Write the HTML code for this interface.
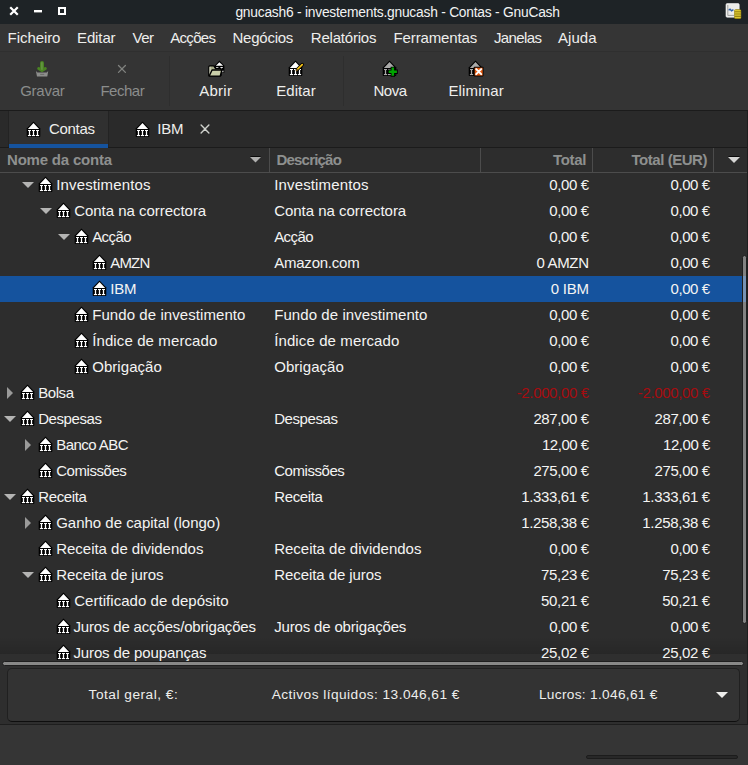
<!DOCTYPE html><html><head><meta charset="utf-8"><title>gnucash6 - investements.gnucash - Contas - GnuCash</title><style>
html,body{margin:0;padding:0}
body{width:748px;height:765px;overflow:hidden;position:relative;background:#353535;font-family:"Liberation Sans",sans-serif;font-size:15px;color:#eeeeec}
.abs{position:absolute;display:block}
.t{position:absolute;white-space:pre;display:block}
.title{font-size:13.8px;color:#f2f3f3}
.menu{color:#eeeeec}
.tb{color:#eeeeec}
.tb.dis{color:#8b8d8c}
.tab{color:#eeeeec}
.hd{font-weight:bold;color:#8e908f}
.cell{color:#f4f4f3}
.neg{color:#a60c10}
.sum{font-size:13.7px;color:#eeeeec}
#titlebar{left:0;top:0;width:748px;height:24px;background:#1e2326}
#menubar{left:0;top:24px;width:748px;height:27px;background:#353535}
#menuline{left:0;top:51px;width:748px;height:1px;background:#2f2f2f}
#toolbar{left:0;top:52px;width:748px;height:58px;background:#343434}
#nbline{left:0;top:110px;width:748px;height:1px;background:#1b1b1b}
#nbhead{left:0;top:111px;width:748px;height:36px;background:#2a2a2a}
#tabact{left:8px;top:111px;width:99px;height:36px;background:#303030;border-left:1px solid #232323;border-right:1px solid #232323}
#tabul{left:9px;top:144px;width:99px;height:4px;background:#15539e}
#nbline2{left:0;top:147px;width:748px;height:1px;background:#1b1b1b}
#thead{left:0;top:148px;width:748px;height:24px;background:#2d2d2d}
#theadline{left:0;top:172px;width:748px;height:1px;background:#4c4c4c}
.vsep{position:absolute;top:148px;width:1px;height:24px;background:#4c4c4c}
#treebg{left:0;top:173px;width:748px;height:488px;background:#2d2d2d}
#tree{position:absolute;left:0;top:0;width:748px;height:661px;overflow:hidden}
.selrow{position:absolute;left:0;width:748px;height:26px;background:#15539e}
#hband{left:0;top:654px;width:748px;height:14px;background:#2f2f2f}
#sumarea{left:0;top:667px;width:748px;height:57px;background:#2e2e2e}
#frameL{left:0;top:111px;width:1px;height:613px;background:#1e1e1e}
#frameR{left:747px;top:111px;width:1px;height:613px;background:#1e1e1e}
#frameB{left:0;top:724px;width:748px;height:1px;background:#1e1e1e}
#sumbox{left:7px;top:668px;width:731px;height:52px;border:1px solid #202020;border-bottom-color:#0e0e0e;border-radius:5px;background:#333333}
#status{left:0;top:725px;width:748px;height:40px;background:#353535}
#prog{left:586px;top:755px;width:150px;height:2px;border:1px solid #1c1c1c;border-radius:2px;background:#282828}

</style></head><body>
<svg width="0" height="0" style="position:absolute"><defs>
<g id="bank">
<path d="M9.5 2.5 L16.3 9.6 L16.3 17.2 Q16.3 17.9 15.6 17.9 L3.4 17.9 Q2.7 17.9 2.7 17.2 L2.7 9.6 Z" fill="#000"/>
<polygon points="9.5,4.1 15.1,9.9 3.9,9.9" fill="#fff"/>
<g fill="#fff">
<rect x="4" y="11" width="3" height="1"/><rect x="4.85" y="11" width="1.3" height="6"/><rect x="3.9" y="16" width="3.2" height="1.1"/>
<rect x="8" y="11" width="3" height="1"/><rect x="8.85" y="11" width="1.3" height="6"/><rect x="7.9" y="16" width="3.2" height="1.1"/>
<rect x="12" y="11" width="3" height="1"/><rect x="12.85" y="11" width="1.3" height="6"/><rect x="11.9" y="16" width="3.2" height="1.1"/>
</g>
</g>
<g id="bankg">
<path d="M9.5 2.5 L16.3 9.6 L16.3 17.2 Q16.3 17.9 15.6 17.9 L3.4 17.9 Q2.7 17.9 2.7 17.2 L2.7 9.6 Z" fill="#000"/>
<polygon points="9.5,4.1 15.1,9.9 3.9,9.9" fill="#a9a9a8"/>
<g fill="#a9a9a8">
<rect x="4" y="11" width="3" height="1"/><rect x="4.85" y="11" width="1.3" height="6"/><rect x="3.9" y="16" width="3.2" height="1.1"/>
<rect x="8" y="11" width="3" height="1"/><rect x="8.85" y="11" width="1.3" height="6"/><rect x="7.9" y="16" width="3.2" height="1.1"/>
<rect x="12" y="11" width="3" height="1"/><rect x="12.85" y="11" width="1.3" height="6"/><rect x="11.9" y="16" width="3.2" height="1.1"/>
</g>
</g>
</defs></svg>
<div class="abs" id="titlebar"></div>
<div class="abs" id="menubar"></div>
<div class="abs" id="menuline"></div>
<div class="abs" id="toolbar"></div>
<div class="abs" id="nbline"></div>
<div class="abs" id="nbhead"></div>
<div class="abs" id="nbline2"></div>
<div class="abs" id="tabact"></div>
<div class="abs" id="tabul"></div>
<div class="abs" id="thead"></div>
<div class="abs" id="theadline"></div>
<div class="vsep" style="left:269px"></div>
<div class="vsep" style="left:480px"></div>
<div class="vsep" style="left:592px"></div>
<div class="vsep" style="left:713px"></div>
<div class="abs" id="treebg"></div>
<!-- window buttons -->
<svg class="abs" style="left:0;top:0" width="80" height="24">
<path d="M11 8 L17 14 M17 8 L11 14" stroke="#fff" stroke-width="2.2" stroke-linecap="square"/>
<rect x="34" y="10" width="8" height="2.4" fill="#fff"/>
<rect x="59" y="8" width="6" height="6" fill="none" stroke="#fff" stroke-width="2"/>
</svg>
<!-- header arrows -->
<svg class="abs" style="left:250px;top:156px" width="11" height="7"><rect x="0.5" y="0" width="10" height="1" fill="#0a0a0a"/><polygon points="0,1 11,1 5.5,6.5" fill="#b0b0af"/></svg>
<svg class="abs" style="left:728px;top:156px" width="12" height="7"><rect x="0.5" y="0" width="11" height="1" fill="#0a0a0a"/><polygon points="0,1 12,1 6,7" fill="#d6d6d5"/></svg>
<!-- toolbar separators -->
<div class="abs" style="left:169px;top:56px;width:1px;height:50px;background:#2e2e2e"></div>
<div class="abs" style="left:343px;top:56px;width:1px;height:50px;background:#2e2e2e"></div>
<!-- tab icons -->
<svg class="abs" style="left:24px;top:119px" width="20" height="20"><use href="#bank"/></svg>
<svg class="abs" style="left:133px;top:119px" width="20" height="20"><use href="#bank"/></svg>
<svg class="abs" style="left:199px;top:123px" width="12" height="12"><path d="M2.1 2.1 L9.9 9.9 M9.9 2.1 L2.1 9.9" stroke="#cfd1cc" stroke-width="1.4" stroke-linecap="round"/></svg>
<div class="abs" id="sumarea"></div>
<div class="abs" id="sumbox"></div>
<div class="abs" id="status"></div>
<div class="abs" id="prog"></div>
<div class="abs" style="left:0;top:636px;width:748px;height:18px;background:linear-gradient(rgba(0,0,0,0),rgba(0,0,0,.13))"></div>
<div class="abs" id="hband"></div>
<!-- toolbar icons -->
<svg class="abs" style="left:30px;top:56px" width="24" height="24">
<rect x="10" y="4.9" width="4" height="10.6" rx="2" fill="#4a8322"/>
<path d="M8.7 12.5 L12 14.5 L15.3 12.5" fill="none" stroke="#4a8322" stroke-width="3" stroke-linecap="round" stroke-linejoin="round"/>
<rect x="11.5" y="6.2" width="0.9" height="7.6" fill="#7ba65e"/>
<path d="M5.9 14.9 L7 20.6 L17.3 20.6 L18.2 14.9 L16.7 16.4 L7.5 16.4 Z" fill="#8d8e8c"/>
<rect x="10.2" y="17.9" width="4" height="0.9" fill="#666765"/>
</svg>
<svg class="abs" style="left:110px;top:56px" width="24" height="24"><path d="M8.5 9.5 L15.4 16.4 M15.4 9.5 L8.5 16.4" stroke="#80827f" stroke-width="1.3" stroke-linecap="round"/></svg>
<svg class="abs" style="left:204px;top:56px" width="24" height="24">
<path d="M15.4 4.6 L20.4 9.7 L20.4 16.8 L11 16.8 L10.6 9.7 Z" fill="#000"/>
<polygon points="15.4,6.2 19.2,9.7 11.8,9.7" fill="#fff"/>
<rect x="12" y="11" width="2.4" height="0.9" fill="#fff"/><rect x="12.8" y="11" width="0.9" height="2.2" fill="#fff"/>
<rect x="16.2" y="11" width="2.6" height="0.9" fill="#fff"/><rect x="17.1" y="11" width="0.9" height="2.6" fill="#fff"/>
<rect x="18.2" y="14.6" width="1.2" height="1.6" fill="#fff"/>
<path d="M4.9 19.6 L4.9 10.8 Q4.9 9.9 5.8 9.9 L9.9 9.9 L11.6 12.5 L17 12.5 L17 19.6 Z" fill="#a8ad89" stroke="#000" stroke-width="1.4" stroke-linejoin="round"/>
<rect x="5.5" y="10.8" width="0.9" height="8.6" fill="#eeeedd"/>
<path d="M8.1 14 L17.9 14 L16.2 20.1 L5.1 20.1 Z" fill="#c9cea9" stroke="#000" stroke-width="1.4" stroke-linejoin="round"/>
</svg>
<svg class="abs" style="left:286.3px;top:58.3px" width="24" height="24">
<use href="#bank"/>
<path d="M11.3 11.5 L16.3 6.5" stroke="#000" stroke-width="3.2" stroke-linecap="round"/>
<path d="M11.4 11.4 L16.2 6.6" stroke="#f6c318" stroke-width="1.7" stroke-linecap="round"/>
<path d="M10.4 12.5 L11.2 11.7" stroke="#6b4a10" stroke-width="1.4" stroke-linecap="round"/>
</svg>
<svg class="abs" style="left:380.3px;top:58.3px" width="24" height="24">
<use href="#bankg"/>
<path d="M10.600000000000001 8.7 H15.0 V11.5 H17.8 V15.899999999999999 H15.0 V18.7 H10.600000000000001 V15.899999999999999 H7.800000000000001 V11.5 H10.600000000000001 Z" fill="#000"/>
<path d="M11.5 9.6 H14.100000000000001 V12.399999999999999 H16.9 V15.0 H14.100000000000001 V17.799999999999997 H11.5 V15.0 H8.700000000000001 V12.399999999999999 H11.5 Z" fill="#00a400"/>
</svg>
<svg class="abs" style="left:466.3px;top:58.3px" width="24" height="24">
<use href="#bankg"/>
<rect x="7.7" y="8.8" width="9.8" height="9.6" rx="0.8" fill="#000"/>
<rect x="8.7" y="9.7" width="8" height="7.9" fill="#e0570f"/>
<path d="M10.2 11.1 L15.2 16.1 M15.2 11.1 L10.2 16.1" stroke="#fff" stroke-width="2" stroke-linecap="round"/>
</svg>
<!-- app icon -->
<svg class="abs" style="left:724px;top:2px" width="20" height="20">
<rect x="2" y="1.6" width="13.2" height="13.6" rx="1.2" fill="#ecece9" stroke="#fbfbfb" stroke-width="0.6"/>
<path d="M3.8 3 V13.4 H10" stroke="#8d8d8d" stroke-width="0.8" fill="none"/>
<path d="M4.6 8.2 L6 7.2 L7.6 8.8 L9.4 7.6" stroke="#2e5fa8" stroke-width="1.3" fill="none"/>
<rect x="10.2" y="7.2" width="7" height="9.8" rx="1.6" fill="#9a8510"/>
<rect x="10.6" y="8" width="6.2" height="1.2" rx=".6" fill="#dcc830"/>
<rect x="10.6" y="10.3" width="6.2" height="1.2" rx=".6" fill="#dcc830"/>
<rect x="10.6" y="12.6" width="6.2" height="1.2" rx=".6" fill="#dcc830"/>
<rect x="10.6" y="14.9" width="6.2" height="1.2" rx=".6" fill="#dcc830"/>
</svg>

<div id="tree">
<svg class="abs" style="left:22px;top:182px" width="12" height="6"><polygon points="0,0 12,0 6,6" fill="#b4b4b3"/></svg>
<svg class="abs ic" style="left:36px;top:174px" width="20" height="20"><use href="#bank"/></svg>
<svg class="abs" style="left:40px;top:208px" width="12" height="6"><polygon points="0,0 12,0 6,6" fill="#b4b4b3"/></svg>
<svg class="abs ic" style="left:54px;top:200px" width="20" height="20"><use href="#bank"/></svg>
<svg class="abs" style="left:58px;top:234px" width="12" height="6"><polygon points="0,0 12,0 6,6" fill="#b4b4b3"/></svg>
<svg class="abs ic" style="left:72px;top:226px" width="20" height="20"><use href="#bank"/></svg>
<svg class="abs ic" style="left:90px;top:252px" width="20" height="20"><use href="#bank"/></svg>
<div class="selrow" style="top:276px"></div>
<svg class="abs ic" style="left:90px;top:278px" width="20" height="20"><use href="#bank"/></svg>
<svg class="abs ic" style="left:72px;top:304px" width="20" height="20"><use href="#bank"/></svg>
<svg class="abs ic" style="left:72px;top:330px" width="20" height="20"><use href="#bank"/></svg>
<svg class="abs ic" style="left:72px;top:356px" width="20" height="20"><use href="#bank"/></svg>
<svg class="abs" style="left:7px;top:387px" width="6" height="12"><polygon points="0,0 6,6 0,12" fill="#9a9a99"/></svg>
<svg class="abs ic" style="left:18px;top:382px" width="20" height="20"><use href="#bank"/></svg>
<svg class="abs" style="left:4px;top:416px" width="12" height="6"><polygon points="0,0 12,0 6,6" fill="#b4b4b3"/></svg>
<svg class="abs ic" style="left:18px;top:408px" width="20" height="20"><use href="#bank"/></svg>
<svg class="abs" style="left:25px;top:439px" width="6" height="12"><polygon points="0,0 6,6 0,12" fill="#9a9a99"/></svg>
<svg class="abs ic" style="left:36px;top:434px" width="20" height="20"><use href="#bank"/></svg>
<svg class="abs ic" style="left:36px;top:460px" width="20" height="20"><use href="#bank"/></svg>
<svg class="abs" style="left:4px;top:494px" width="12" height="6"><polygon points="0,0 12,0 6,6" fill="#b4b4b3"/></svg>
<svg class="abs ic" style="left:18px;top:486px" width="20" height="20"><use href="#bank"/></svg>
<svg class="abs" style="left:25px;top:517px" width="6" height="12"><polygon points="0,0 6,6 0,12" fill="#9a9a99"/></svg>
<svg class="abs ic" style="left:36px;top:512px" width="20" height="20"><use href="#bank"/></svg>
<svg class="abs ic" style="left:36px;top:538px" width="20" height="20"><use href="#bank"/></svg>
<svg class="abs" style="left:22px;top:572px" width="12" height="6"><polygon points="0,0 12,0 6,6" fill="#b4b4b3"/></svg>
<svg class="abs ic" style="left:36px;top:564px" width="20" height="20"><use href="#bank"/></svg>
<svg class="abs ic" style="left:54px;top:590px" width="20" height="20"><use href="#bank"/></svg>
<svg class="abs ic" style="left:54px;top:616px" width="20" height="20"><use href="#bank"/></svg>
<svg class="abs ic" style="left:54px;top:642px" width="20" height="20"><use href="#bank"/></svg>
</div>
<span class="t title" id="t0" style="left:235.4px;top:0.6px;line-height:24px;letter-spacing:-0.232px">gnucash6 - investements.gnucash - Contas - GnuCash</span>
<span class="t menu" id="t1" style="left:7.6px;top:24.4px;line-height:27px;letter-spacing:-0.070px">Ficheiro</span>
<span class="t menu" id="t2" style="left:77px;top:24.4px;line-height:27px;letter-spacing:-0.115px">Editar</span>
<span class="t menu" id="t3" style="left:132.4px;top:24.4px;line-height:27px;letter-spacing:-0.405px">Ver</span>
<span class="t menu" id="t4" style="left:170.3px;top:24.4px;line-height:27px;letter-spacing:-0.717px">Acções</span>
<span class="t menu" id="t5" style="left:232.5px;top:24.4px;line-height:27px;letter-spacing:-0.243px">Negócios</span>
<span class="t menu" id="t6" style="left:310.8px;top:24.4px;line-height:27px;letter-spacing:-0.213px">Relatórios</span>
<span class="t menu" id="t7" style="left:393.5px;top:24.4px;line-height:27px;letter-spacing:-0.121px">Ferramentas</span>
<span class="t menu" id="t8" style="left:493.9px;top:24.4px;line-height:27px;letter-spacing:-0.600px">Janelas</span>
<span class="t menu" id="t9" style="left:558px;top:24.4px;line-height:27px;letter-spacing:0.045px">Ajuda</span>
<span class="t tb dis" id="t10" style="left:20.2px;top:78px;line-height:26px;letter-spacing:-0.241px">Gravar</span>
<span class="t tb dis" id="t11" style="left:100.4px;top:78px;line-height:26px;letter-spacing:-0.481px">Fechar</span>
<span class="t tb " id="t12" style="left:199.2px;top:78px;line-height:26px;letter-spacing:0.266px">Abrir</span>
<span class="t tb " id="t13" style="left:276.2px;top:78px;line-height:26px;letter-spacing:0.085px">Editar</span>
<span class="t tb " id="t14" style="left:373.5px;top:78px;line-height:26px;letter-spacing:-0.508px">Nova</span>
<span class="t tb " id="t15" style="left:448.4px;top:78px;line-height:26px;letter-spacing:0.152px">Eliminar</span>
<span class="t tab" id="t16" style="left:49.1px;top:116px;line-height:26px;letter-spacing:-0.339px">Contas</span>
<span class="t tab" id="t17" style="left:157.2px;top:116px;line-height:26px;letter-spacing:-0.224px">IBM</span>
<span class="t hd" id="t18" style="left:7px;top:148px;line-height:24px;letter-spacing:-0.195px">Nome da conta</span>
<span class="t hd" id="t19" style="left:276.5px;top:148px;line-height:24px;letter-spacing:-0.802px">Descrição</span>
<span class="t hd" id="t20" style="right:162px;top:148px;line-height:24px;letter-spacing:-0.344px">Total</span>
<span class="t hd" id="t21" style="right:41px;top:148px;line-height:24px;letter-spacing:-0.459px">Total (EUR)</span>
<span class="t cell" id="t22" style="left:56.2px;top:172px;line-height:26px;letter-spacing:0.150px">Investimentos</span>
<span class="t cell" id="t23" style="left:274.2px;top:172px;line-height:26px;letter-spacing:0.150px">Investimentos</span>
<span class="t cell" id="t24" style="right:159.3px;top:172px;line-height:26px;letter-spacing:-0.386px">0,00 €</span>
<span class="t cell" id="t25" style="right:38.2px;top:172px;line-height:26px;letter-spacing:-0.386px">0,00 €</span>
<span class="t cell" id="t26" style="left:74.2px;top:198px;line-height:26px;letter-spacing:-0.030px">Conta na correctora</span>
<span class="t cell" id="t27" style="left:274.2px;top:198px;line-height:26px;letter-spacing:-0.030px">Conta na correctora</span>
<span class="t cell" id="t28" style="right:159.3px;top:198px;line-height:26px;letter-spacing:-0.386px">0,00 €</span>
<span class="t cell" id="t29" style="right:38.2px;top:198px;line-height:26px;letter-spacing:-0.386px">0,00 €</span>
<span class="t cell" id="t30" style="left:92.2px;top:224px;line-height:26px;letter-spacing:-0.581px">Acção</span>
<span class="t cell" id="t31" style="left:274.2px;top:224px;line-height:26px;letter-spacing:-0.581px">Acção</span>
<span class="t cell" id="t32" style="right:159.3px;top:224px;line-height:26px;letter-spacing:-0.386px">0,00 €</span>
<span class="t cell" id="t33" style="right:38.2px;top:224px;line-height:26px;letter-spacing:-0.386px">0,00 €</span>
<span class="t cell" id="t34" style="left:110.2px;top:250px;line-height:26px;letter-spacing:-0.800px">AMZN</span>
<span class="t cell" id="t35" style="left:274.2px;top:250px;line-height:26px;letter-spacing:-0.225px">Amazon.com</span>
<span class="t cell" id="t36" style="right:159.3px;top:250px;line-height:26px;letter-spacing:-0.315px">0 AMZN</span>
<span class="t cell" id="t37" style="right:38.2px;top:250px;line-height:26px;letter-spacing:-0.386px">0,00 €</span>
<span class="t cell" id="t38" style="left:110.2px;top:276px;line-height:26px;letter-spacing:-0.224px">IBM</span>
<span class="t cell" id="t39" style="right:159.3px;top:276px;line-height:26px;letter-spacing:-0.237px">0 IBM</span>
<span class="t cell" id="t40" style="right:38.2px;top:276px;line-height:26px;letter-spacing:-0.386px">0,00 €</span>
<span class="t cell" id="t41" style="left:92.2px;top:302px;line-height:26px;letter-spacing:0.073px">Fundo de investimento</span>
<span class="t cell" id="t42" style="left:274.2px;top:302px;line-height:26px;letter-spacing:0.073px">Fundo de investimento</span>
<span class="t cell" id="t43" style="right:159.3px;top:302px;line-height:26px;letter-spacing:-0.386px">0,00 €</span>
<span class="t cell" id="t44" style="right:38.2px;top:302px;line-height:26px;letter-spacing:-0.386px">0,00 €</span>
<span class="t cell" id="t45" style="left:92.2px;top:328px;line-height:26px;letter-spacing:0.111px">Índice de mercado</span>
<span class="t cell" id="t46" style="left:274.2px;top:328px;line-height:26px;letter-spacing:0.111px">Índice de mercado</span>
<span class="t cell" id="t47" style="right:159.3px;top:328px;line-height:26px;letter-spacing:-0.386px">0,00 €</span>
<span class="t cell" id="t48" style="right:38.2px;top:328px;line-height:26px;letter-spacing:-0.386px">0,00 €</span>
<span class="t cell" id="t49" style="left:92.2px;top:354px;line-height:26px;letter-spacing:0.053px">Obrigação</span>
<span class="t cell" id="t50" style="left:274.2px;top:354px;line-height:26px;letter-spacing:0.053px">Obrigação</span>
<span class="t cell" id="t51" style="right:159.3px;top:354px;line-height:26px;letter-spacing:-0.386px">0,00 €</span>
<span class="t cell" id="t52" style="right:38.2px;top:354px;line-height:26px;letter-spacing:-0.386px">0,00 €</span>
<span class="t cell" id="t53" style="left:38.2px;top:380px;line-height:26px;letter-spacing:-0.426px">Bolsa</span>
<span class="t cell neg" id="t54" style="right:159.3px;top:380px;line-height:26px;letter-spacing:-0.355px">-2.000,00 €</span>
<span class="t cell neg" id="t55" style="right:38.2px;top:380px;line-height:26px;letter-spacing:-0.355px">-2.000,00 €</span>
<span class="t cell" id="t56" style="left:38.2px;top:406px;line-height:26px;letter-spacing:-0.413px">Despesas</span>
<span class="t cell" id="t57" style="left:274.2px;top:406px;line-height:26px;letter-spacing:-0.413px">Despesas</span>
<span class="t cell" id="t58" style="right:159.3px;top:406px;line-height:26px;letter-spacing:-0.386px">287,00 €</span>
<span class="t cell" id="t59" style="right:38.2px;top:406px;line-height:26px;letter-spacing:-0.386px">287,00 €</span>
<span class="t cell" id="t60" style="left:56.2px;top:432px;line-height:26px;letter-spacing:-0.535px">Banco ABC</span>
<span class="t cell" id="t61" style="right:159.3px;top:432px;line-height:26px;letter-spacing:-0.478px">12,00 €</span>
<span class="t cell" id="t62" style="right:38.2px;top:432px;line-height:26px;letter-spacing:-0.478px">12,00 €</span>
<span class="t cell" id="t63" style="left:56.2px;top:458px;line-height:26px;letter-spacing:-0.443px">Comissões</span>
<span class="t cell" id="t64" style="left:274.2px;top:458px;line-height:26px;letter-spacing:-0.443px">Comissões</span>
<span class="t cell" id="t65" style="right:159.3px;top:458px;line-height:26px;letter-spacing:-0.386px">275,00 €</span>
<span class="t cell" id="t66" style="right:38.2px;top:458px;line-height:26px;letter-spacing:-0.386px">275,00 €</span>
<span class="t cell" id="t67" style="left:38.2px;top:484px;line-height:26px;letter-spacing:-0.366px">Receita</span>
<span class="t cell" id="t68" style="left:274.2px;top:484px;line-height:26px;letter-spacing:-0.366px">Receita</span>
<span class="t cell" id="t69" style="right:159.3px;top:484px;line-height:26px;letter-spacing:-0.341px">1.333,61 €</span>
<span class="t cell" id="t70" style="right:38.2px;top:484px;line-height:26px;letter-spacing:-0.341px">1.333,61 €</span>
<span class="t cell" id="t71" style="left:56.2px;top:510px;line-height:26px;letter-spacing:-0.012px">Ganho de capital (longo)</span>
<span class="t cell" id="t72" style="right:159.3px;top:510px;line-height:26px;letter-spacing:-0.341px">1.258,38 €</span>
<span class="t cell" id="t73" style="right:38.2px;top:510px;line-height:26px;letter-spacing:-0.341px">1.258,38 €</span>
<span class="t cell" id="t74" style="left:56.2px;top:536px;line-height:26px;letter-spacing:-0.019px">Receita de dividendos</span>
<span class="t cell" id="t75" style="left:274.2px;top:536px;line-height:26px;letter-spacing:-0.019px">Receita de dividendos</span>
<span class="t cell" id="t76" style="right:159.3px;top:536px;line-height:26px;letter-spacing:-0.386px">0,00 €</span>
<span class="t cell" id="t77" style="right:38.2px;top:536px;line-height:26px;letter-spacing:-0.386px">0,00 €</span>
<span class="t cell" id="t78" style="left:56.2px;top:562px;line-height:26px;letter-spacing:-0.069px">Receita de juros</span>
<span class="t cell" id="t79" style="left:274.2px;top:562px;line-height:26px;letter-spacing:-0.069px">Receita de juros</span>
<span class="t cell" id="t80" style="right:159.3px;top:562px;line-height:26px;letter-spacing:-0.350px">75,23 €</span>
<span class="t cell" id="t81" style="right:38.2px;top:562px;line-height:26px;letter-spacing:-0.350px">75,23 €</span>
<span class="t cell" id="t82" style="left:74.2px;top:588px;line-height:26px;letter-spacing:0.042px">Certificado de depósito</span>
<span class="t cell" id="t83" style="right:159.3px;top:588px;line-height:26px;letter-spacing:-0.350px">50,21 €</span>
<span class="t cell" id="t84" style="right:38.2px;top:588px;line-height:26px;letter-spacing:-0.350px">50,21 €</span>
<span class="t cell" id="t85" style="left:73.4px;top:614px;line-height:26px;letter-spacing:-0.165px">Juros de acções/obrigações</span>
<span class="t cell" id="t86" style="left:274.2px;top:614px;line-height:26px;letter-spacing:-0.163px">Juros de obrigações</span>
<span class="t cell" id="t87" style="right:159.3px;top:614px;line-height:26px;letter-spacing:-0.386px">0,00 €</span>
<span class="t cell" id="t88" style="right:38.2px;top:614px;line-height:26px;letter-spacing:-0.386px">0,00 €</span>
<span class="t cell" id="t89" style="left:73.4px;top:640px;line-height:26px;letter-spacing:-0.117px">Juros de poupanças</span>
<span class="t cell" id="t90" style="right:159.3px;top:640px;line-height:26px;letter-spacing:-0.350px">25,02 €</span>
<span class="t cell" id="t91" style="right:38.2px;top:640px;line-height:26px;letter-spacing:-0.350px">25,02 €</span>
<span class="t sum" id="t92" style="left:88.6px;top:682px;line-height:26px;letter-spacing:0.495px">Total geral, €:</span>
<span class="t sum" id="t93" style="left:271.7px;top:682px;line-height:26px;letter-spacing:0.451px">Activos líquidos: 13.046,61 €</span>
<span class="t sum" id="t94" style="left:538.9px;top:682px;line-height:26px;letter-spacing:0.306px">Lucros: 1.046,61 €</span>
<div class="abs" style="left:2px;top:661px;width:740px;height:3px;border:1px solid #1e1e1e;border-radius:3px;background:#888887"></div>
<div class="abs" style="left:742px;top:255px;width:3px;height:367px;border:1px solid #1f1f1f;border-radius:3px;background:rgba(200,200,200,.55)"></div>
<svg class="abs" style="left:716px;top:692px" width="12" height="6"><polygon points="0,0 12,0 6,6" fill="#eeeeec"/></svg>

<div class="abs" id="frameR"></div><div class="abs" id="frameB"></div>

</body></html>
